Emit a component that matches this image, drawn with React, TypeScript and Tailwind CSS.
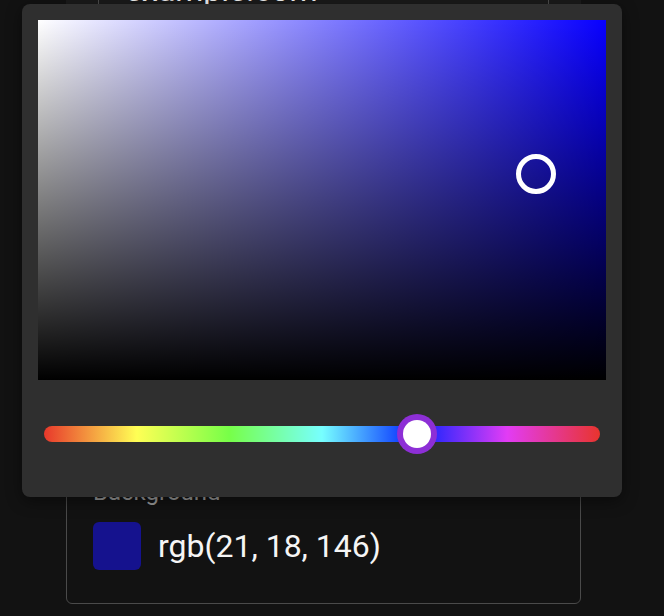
import * as React from "react";

const font = { fontFamily: "Roboto, 'Noto Sans', sans-serif" };

export default function App() {
  return (
    <div
      className="relative w-[664px] h-[616px] overflow-hidden bg-[#121212] text-white"
      style={font}
    >
      <div className="ml-[66px] w-[515px] -mt-[46px] flex flex-col">
        {/* domain card, mostly hidden behind the picker */}
        <div className="h-[506px] bg-[#1b1b1b] px-[32px] pt-[4px]">
          <div className="h-[64px] rounded-[4px] border border-[#4d4d4d] px-[26px] flex items-center text-[32px] text-[#f2f2f2]">
            example.com
          </div>
        </div>

        {/* background colour field */}
        <div className="h-[144px] rounded-[6px] border border-[#4a4a4a] pl-[26px] pt-[17px]">
          <div className="text-[24px] leading-[28px] text-[#9a9a9a]">Background</div>
          <div className="mt-[16px] flex items-center gap-[17px]">
            <div className="w-[48px] h-[48px] rounded-[6px] bg-[#15128e]" />
            <span className="text-[32px] leading-[40px] text-[#f5f5f5]">rgb(21, 18, 146)</span>
          </div>
        </div>
      </div>

      {/* colour picker popover */}
      <div className="absolute left-[22px] top-[4px] w-[600px] h-[493px] rounded-[8px] bg-[#2f2f2f] p-[16px] shadow-[0_4px_16px_rgba(0,0,0,0.45)]">
        <div className="relative w-[568px] h-[360px] bg-[linear-gradient(to_top,#000,transparent),linear-gradient(to_right,#fff,#0800ff)]">
          <div className="absolute left-[478px] top-[134px] w-[40px] h-[40px] rounded-full border-[5px] border-white" />
        </div>
        <div className="relative mt-[46px] mx-[6px] h-[16px] rounded-full bg-[linear-gradient(to_right,#e8382b,#ffff55_16.7%,#77ff48_33.3%,#77ffff_50%,#0022ff_66.7%,#e23cf5_83.3%,#e8342d)]">
          <div className="absolute left-[353px] top-[-12px] w-[40px] h-[40px] rounded-full bg-[#8d2fd6] flex items-center justify-center">
            <div className="w-[28px] h-[28px] rounded-full bg-white" />
          </div>
        </div>
      </div>
    </div>
  );
}
